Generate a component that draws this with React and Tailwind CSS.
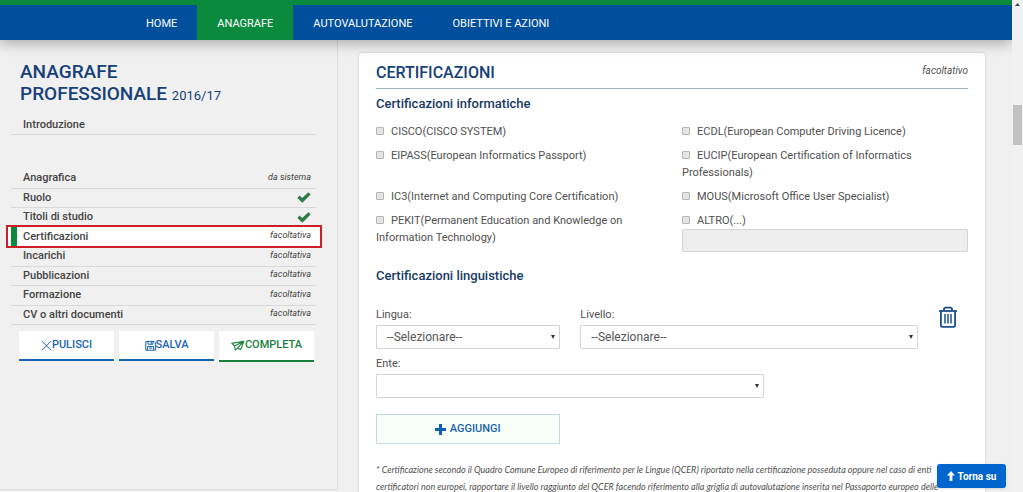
import React from "react";

const navItems = [
  { label: "HOME" },
  { label: "ANAGRAFE", active: true },
  { label: "AUTOVALUTAZIONE" },
  { label: "OBIETTIVI E AZIONI" },
];

const sections = [
  { label: "Anagrafica", note: "da sistema" },
  { label: "Ruolo", done: true },
  { label: "Titoli di studio", done: true },
  { label: "Certificazioni", note: "facoltativa", current: true },
  { label: "Incarichi", note: "facoltativa" },
  { label: "Pubblicazioni", note: "facoltativa" },
  { label: "Formazione", note: "facoltativa" },
  { label: "CV o altri documenti", note: "facoltativa" },
];

const certifications = [
  "CISCO(CISCO SYSTEM)",
  "ECDL(European Computer Driving Licence)",
  "EIPASS(European Informatics Passport)",
  "EUCIP(European Certification of Informatics Professionals)",
  "IC3(Internet and Computing Core Certification)",
  "MOUS(Microsoft Office User Specialist)",
  "PEKIT(Permanent Education and Knowledge on Information Technology)",
  "ALTRO(...)",
];

function CheckIcon() {
  return (
    <svg viewBox="0 0 14 11" className="h-[11px] w-[14px] fill-[#2f7a44]" aria-hidden="true">
      <path d="M0.4 5.9 2.6 3.5 5.2 5.9 11.3 0.3 13.7 2.5 5.3 10.7z" />
    </svg>
  );
}

function CloseIcon() {
  return (
    <svg viewBox="0 0 11 11" className="size-[11px] fill-none stroke-current" aria-hidden="true">
      <path d="M1 1.2 10 10.2M10 1.2 1 10.2" />
    </svg>
  );
}

function SaveIcon() {
  return (
    <svg viewBox="0 0 11 11" className="size-[11px] fill-none stroke-current" aria-hidden="true">
      <path d="M0.8 1.4h8.2l1.4 1.4v7.4H0.8zM3 1.4v2.8h5V1.4M6.4 1.8v2M2.6 10V6.4h6V10M4 8h3.2" />
    </svg>
  );
}

function SendIcon() {
  return (
    <svg viewBox="0 0 14 11" className="h-[11px] w-[14px] fill-none stroke-current" strokeWidth="1.1" strokeLinejoin="round" aria-hidden="true">
      <path d="M12.8 1.2 0.8 3.4 3.6 6 4.2 10 6.2 8.3 9.8 9.4zM12.8 1.2 3.6 6M12.8 1.2 6.2 8.3" />
    </svg>
  );
}

function TrashIcon() {
  return (
    <svg viewBox="0 0 20 22" className="h-[22px] w-5 fill-none stroke-current" strokeWidth="1.8" aria-hidden="true">
      <path d="M1 5h18" />
      <path d="M6 5V3.2Q6 1.6 7.6 1.6h4.8Q14 1.6 14 3.2V5" />
      <path d="M2.900 5v14.2q0 1.6 1.6 1.6h11q1.6 0 1.6-1.6V5" />
      <path d="M7 8v9.4M10 8v9.4M13 8v9.4" strokeWidth="1.5" />
    </svg>
  );
}

function SelectBox({ id, value }) {
  return (
    <div className="relative">
      <select
        id={id}
        className="block h-6 w-full appearance-none rounded-[1px] border border-[#d2d6da] bg-white pr-5 pl-[10px] text-xs text-[#555]"
      >
        <option>{value}</option>
      </select>
      <svg viewBox="0 0 4 4" className="pointer-events-none absolute top-[10px] right-[5px] size-1 fill-[#333]" aria-hidden="true">
        <path d="M0 0h4L2 4z" />
      </svg>
    </div>
  );
}

function Header() {
  return (
    <header className="relative z-10 border-t-[5px] border-[#0a8a3c] bg-[#004f9c] shadow-[0_4px_12px_rgba(0,0,0,0.28)]">
      <nav className="flex h-[35px] pl-[126px]">
        {navItems.map((item) => (
          <a
            key={item.label}
            href="#"
            className={
              item.active
                ? "flex items-center bg-[#0a8a3c] px-5 pt-[3px] text-[11px] text-white"
                : "flex items-center px-5 pt-[3px] text-[11px] text-white"
            }
          >
            {item.label}
          </a>
        ))}
      </nav>
    </header>
  );
}

function ActionButton({ icon, label, green }) {
  return (
    <button
      type="button"
      className={
        green
          ? "flex h-[31px] flex-1 items-center justify-center border-b-2 border-[#17803d] bg-white text-[11px] font-medium text-[#17803d]"
          : "flex h-[30px] flex-1 items-center justify-center border-b-2 border-[#1463b5] bg-white text-[11px] font-medium text-[#1a62ad]"
      }
    >
      {icon}
      {label}
    </button>
  );
}

function Sidebar() {
  return (
    <aside className="flex w-[33.4%] shrink-0 flex-col border-r border-b border-[#dcdcdc] pt-[21px] pr-[21px] pl-[11px]">
      <h1 className="pl-[9px] text-[19px] leading-[22px] font-medium text-[#17407a]">
        ANAGRAFE
        <br />
        PROFESSIONALE <span className="text-[13px] font-normal">2016/17</span>
      </h1>
      <a href="#" className="mt-2 block h-[20px] border-b border-[#d9d9d9] pl-3 text-[11px] leading-[20px] font-medium text-[#444]">
        Introduzione
      </a>
      <ul className="mt-[34px] grid h-[156px] auto-rows-fr">
        {sections.map((s) => (
          <li key={s.label} className="relative border-b border-[#d9d9d9]">
            {s.current && (
              <span className="absolute -top-[3px] -right-[6px] -bottom-[2px] -left-[5px] border-2 border-[#cc1f27] bg-white">
                <span className="absolute top-0 bottom-0 left-[3px] w-[6px] bg-[#0a8a3c]" />
              </span>
            )}
            <a href="#" className="relative flex h-full items-center justify-between pr-[5px] pl-3 text-[11px] font-medium text-[#444]">
              {s.label}
              {s.done ? <CheckIcon /> : <em className="pb-[2px] text-[9px] font-normal">{s.note}</em>}
            </a>
          </li>
        ))}
      </ul>
      <div className="mt-[6px] flex items-start gap-[5px] pr-[2px] pl-2">
        <ActionButton icon={<CloseIcon />} label="PULISCI" />
        <ActionButton icon={<SaveIcon />} label="SALVA" />
        <ActionButton icon={<SendIcon />} label="COMPLETA" green />
      </div>
    </aside>
  );
}

function Certifications() {
  return (
    <main className="min-w-0 flex-1 pt-[13px] pr-[27px] pl-[21px]">
      <section className="min-h-full rounded-t-[3px] bg-white px-[17px] pt-[8px] text-[#505050] shadow-[0_0_3px_rgba(0,0,0,0.18)]">
        <div className="flex h-[28px] justify-between border-b border-[#9db3c4]">
          <h2 className="text-[16px] leading-[23px] font-medium text-[#17407a]">CERTIFICAZIONI</h2>
          <em className="text-[10px] leading-[20px]">facoltativo</em>
        </div>
        <h3 className="mt-[6px] text-[13px] leading-[18px] font-medium text-[#173a63]">Certificazioni informatiche</h3>
        <div className="mt-[10px] grid grid-cols-2 gap-x-5 gap-y-[7px] text-[11px] leading-[17px]">
          {certifications.map((c, i) => (
            <div key={c}>
              <label>
                <input
                  type="checkbox"
                  className="mr-[7px] size-2 appearance-none rounded-[1px] border border-[#b5b5b5] bg-[#e4e4e4]"
                />
                {c}
              </label>
              {i === certifications.length - 1 && (
                <input
                  type="text"
                  disabled
                  aria-label="Altro"
                  className="block h-[23px] w-full rounded-[2px] border border-[#d2d4d6] bg-[#ededed]"
                />
              )}
            </div>
          ))}
        </div>
        <h3 className="mt-[15px] text-[13px] leading-[18px] font-medium text-[#173a63]">Certificazioni linguistiche</h3>
        <div className="mt-[21px] grid grid-cols-[184fr_337fr_30fr] gap-x-5 text-[11px] leading-[17px]">
          <div>
            <label htmlFor="lingua" className="block pb-[2px]">Lingua:</label>
            <SelectBox id="lingua" value="--Selezionare--" />
          </div>
          <div>
            <label htmlFor="livello" className="block pb-[2px]">Livello:</label>
            <SelectBox id="livello" value="--Selezionare--" />
          </div>
          <button type="button" aria-label="Elimina" className="self-start text-[#1b4f91]">
            <TrashIcon />
          </button>
        </div>
        <div className="mt-[6px] w-[65.5%] text-[11px] leading-[17px]">
          <label htmlFor="ente" className="block pb-[2px]">Ente:</label>
          <SelectBox id="ente" value="" />
        </div>
        <button
          type="button"
          className="mt-4 flex h-[30px] w-[31%] items-center justify-center gap-1 border border-[#c5d8e2] bg-[#f8fff9] text-[11px] font-medium text-[#1a62ad]"
        >
          <svg viewBox="0 0 11 11" className="size-[11px] fill-[#0f5fb8]" aria-hidden="true">
            <path d="M4 0h3v4h4v3H7v4H4V7H0V4h4z" />
          </svg>
          AGGIUNGI
        </button>
        <p className="mt-[17px] font-['Lato',sans-serif] text-[9px] leading-[17px] whitespace-nowrap italic">
          * Certificazione secondo il Quadro Comune Europeo di riferimento per le Lingue (QCER) riportato nella certificazione posseduta oppure nel caso di enti
          <br />
          certificatori non europei, rapportare il livello raggiunto del QCER facendo riferimento alla griglia di autovalutazione inserita nel Passaporto europeo delle
        </p>
      </section>
    </main>
  );
}

export default function App() {
  return (
    <div className="relative flex h-screen overflow-hidden bg-[#f0f0f0] font-['Roboto',sans-serif]">
      <div className="flex min-w-0 flex-1 flex-col overflow-hidden">
        <Header />
        <div className="flex min-h-0 flex-1 pb-[2px]">
          <Sidebar />
          <Certifications />
        </div>
      </div>
      <div className="flex w-[11px] shrink-0 flex-col items-center bg-[#f1f1f1]" aria-hidden="true">
        <svg viewBox="0 0 5 3" className="mt-[3px] h-[3px] w-[5px] fill-[#444]">
          <path d="M0 3h5L2.500 0z" />
        </svg>
        <span className="mt-[99px] h-10 w-[9px] bg-[#c1c1c1]" />
      </div>
      <a
        href="#"
        className="absolute right-[17px] bottom-[4px] z-20 flex h-6 w-[69px] items-center justify-center gap-[3px] rounded-[3px] bg-[#0065cc] text-[10px] font-bold text-white shadow"
      >
        <svg viewBox="0 0 8 10" className="h-[10px] w-2 fill-white" aria-hidden="true">
          <path d="M4 0l4 4.500H5.400V10H2.600V4.500H0z" />
        </svg>
        Torna su
      </a>
    </div>
  );
}
